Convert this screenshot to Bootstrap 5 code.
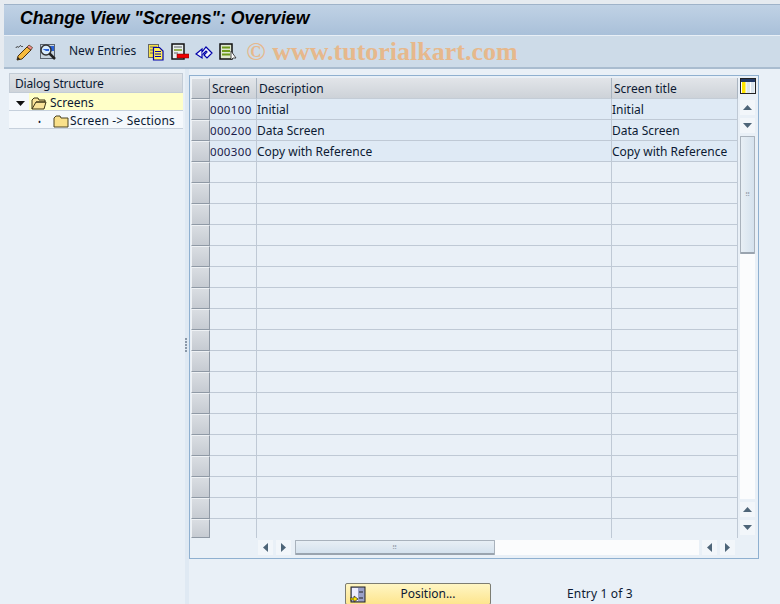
<!DOCTYPE html>
<html lang="en"><head><meta charset="utf-8"><title>Change View</title>
<link href="https://cdn.jsdelivr.net/npm/bootstrap@5.3.0/dist/css/bootstrap.min.css" rel="stylesheet">
<style>
html,body{height:604px;overflow:hidden}
body{background:#e9f0f7;color:#0c1a33;font:12px/1.2 "Noto Sans","Open Sans",sans-serif}
.shell{width:780px;height:604px}
.head-wrap{padding:4px 0 0 4px;background:#e6ebf0}
.title-bar{height:32px;padding-left:16px;background:linear-gradient(#c0d2e5,#a9c0d9);border-top:1px solid #9fb3c9;border-bottom:1px solid #e8eff6;font:italic bold 17.7px "Liberation Sans",sans-serif;color:#000;line-height:26px}
.tool-bar{height:33px;background:#cddbe8;border-bottom:2px solid #a9bccf;padding-left:11px}
.tool-ic{width:18px;height:18px;flex:none}
.tool-gap{margin-left:6px}
.tool-label{margin:0 11px 0 12px;color:#0c1a33;font-size:12px}
.mark-text{font:bold 26px "Liberation Serif",serif;color:#e6b88c;margin-left:9px;white-space:nowrap}
.main-area{height:535px}
.tree-pane{width:185px;padding:4px 2px 0 9px;flex:none}
.tree-head{height:20px;line-height:19px;padding-left:5px;background:linear-gradient(#e0e4e8,#cfd4da);border:1px solid #c3ccd6;letter-spacing:-.2px}
.tree-row{height:18px;border-bottom:1px solid #c6d0dc;background:#f4f8fc;white-space:nowrap;padding-top:4px}
.tree-hi{background:linear-gradient(#f4f8fc,#f4f8fc) no-repeat left/20px 100%,#ffffc8}
.caret-box{width:22px;flex:none;padding-left:7px}
.dot-box{width:44px;text-align:right;padding-right:12px;flex:none;font-size:8px}
.folder-ic{margin-right:3px;flex:none}
.folder-sub{margin-right:1px;flex:none}
.sub-label{letter-spacing:.17px}
.split-bar{width:4px;flex:none;background:#dfe9f3;gap:1px;padding-top:16px}
.split-bar i{width:2px;height:2px;background:#8a98a8;display:block}
.right-pane{width:591px;padding:6px 0 0 0}
.grid-box{width:570px;height:484px;border:1px solid #8fb0d0;padding:2px 1px 0 1px;background:#e9f0f7}
.grid-top{height:459px}
.grid-tbl{width:547px;height:459px;border-collapse:separate;border-spacing:0;table-layout:fixed;flex:none}
.grid-tbl th{height:21px;font-weight:400;padding:2px 0 0 2px;background:linear-gradient(#e2e5e9,#cdd2d8);border-right:1px solid #a9b4c0;border-bottom:1px solid #c3ccd6;white-space:nowrap}
.grid-tbl td{height:21px;padding:2px 0 0;border-right:1px solid #bfc9d5;border-bottom:1px solid #bfc9d5;white-space:nowrap;overflow:hidden}
.grid-tbl tr.filled td{background:#dfeaf5}
.grid-tbl td.sel,.grid-tbl th.sel{background:linear-gradient(#d9dde2,#c6cbd2)!important;border:1px solid #eef1f4;border-right:1px solid #8f99a5;border-bottom:1px solid #8f99a5;padding:0}
.grid-tbl tr:last-child td{height:19px;border-bottom:0}
.grid-tbl tr:last-child td.sel{border-bottom:1px solid #8f99a5}
.grid-tbl td.num-cell{font-size:11.5px;letter-spacing:.35px;color:#1b1b4a}
.vert-sb{width:19px;padding:0 0 2px 2px;gap:3px}
.cfg-btn{height:18px;width:16px;margin-top:-1px;margin-bottom:2px;flex:none}
.sb-btn{height:15px;width:15px;background:#f2f6fa;flex:none}
.v-grow{flex:1;width:15px;background:#fbfcfd;margin-top:-3px}
.v-thumb{width:15px;height:118px;background:linear-gradient(90deg,#e8eff5,#d5e2ee);border:1px solid #a9b2bc;border-bottom:2px solid #9aa4af;border-radius:1px}
.grip{color:#9aa4af;font-size:7px;line-height:1;letter-spacing:1px}
.horz-sb{height:15px;margin:3px 0 0 67px;gap:3px;width:477px}
.h-thumb{width:200px;height:15px;margin-left:1px;background:linear-gradient(#e8eff5,#d5e2ee);border:1px solid #a9b2bc;border-bottom:2px solid #9aa4af;border-radius:1px;flex:none}
.h-track{flex:1;height:15px;background:#fbfcfd;margin-left:-3px}
.foot-row{height:46px;padding-top:24px}
.pos-btn{width:146px;height:22px;padding:0;font-size:12px;line-height:1;margin-left:156px;border:1px solid #7d7d72;border-radius:2px;background:linear-gradient(#fff6c4,#fde58e);color:#0c1a33}
.entry-text{margin-left:76px;white-space:nowrap;line-height:22px;letter-spacing:.15px}
</style></head><body>
<svg width="0" height="0" class="d-block"><defs>
<symbol id="tri-up" viewBox="0 0 15 15"><path d="M3 10 7.500 5 12 10z" fill="#4e6578"/></symbol>
<symbol id="tri-dn" viewBox="0 0 15 15"><path d="M3 5h9L7.500 10z" fill="#4e6578"/></symbol>
<symbol id="tri-l" viewBox="0 0 15 15"><path d="M10 3v9L5 7.500z" fill="#4e6578"/></symbol>
<symbol id="tri-r" viewBox="0 0 15 15"><path d="M5 3v9l5-4.500z" fill="#4e6578"/></symbol>
</defs></svg>
<div class="shell d-flex flex-column">
<div class="head-wrap">
<div class="title-bar">Change View "Screens": Overview</div>
<div class="tool-bar d-flex align-items-center">
<svg class="tool-ic" viewBox="0 0 18 18"><path d="M1 5c1-3 2 0 3-1s1-2 2-1 1 1 2 0" fill="none" stroke="#333"/><path d="M3 13 12 4l4 3-9 9-5 1z" fill="#f7bb3d" stroke="#4a3110"/><path d="m12 4 2-2 3.500 2.500L16 7z" fill="#ee8f8f" stroke="#4a3110" stroke-width=".7"/><path d="m2 17 1-3 2 2z" fill="#222"/></svg>
<svg class="tool-ic tool-gap" viewBox="0 0 18 18"><rect x="1.500" y="1.500" width="14" height="14" fill="#c8d4de" stroke="#5a6470"/><rect x="7" y="3" width="8" height="5" fill="#2a62d8"/><circle cx="7" cy="7" r="5" fill="#d7ebfc" stroke="#333" stroke-width="1.500"/><path d="M3.500 6h6.500v2H7z" fill="#2a62d8"/><path d="m10.500 10.500 5.500 5.500" stroke="#222" stroke-width="2.500"/></svg>
<span class="tool-label">New Entries</span>
<svg class="tool-ic" viewBox="0 0 18 18"><rect x="1.500" y="1.500" width="10" height="13" fill="#f5e04a" stroke="#666"/><path d="M3 4h7M3 7h3M3 10h3" stroke="#666"/><path d="M6.500 4.500h6l3.500 3.500v9H6.500z" fill="#ffef5a" stroke="#00a" stroke-width="1.200"/><path d="M8 8.500h6M8 11h6M8 13.500h6" stroke="#00a"/></svg>
<svg class="tool-ic tool-gap" viewBox="0 0 18 18"><rect x="1" y="1" width="12" height="15" fill="#e9eff0" stroke="#111" stroke-width="1.500"/><path d="M3 4h8" stroke="#8a8f90" stroke-width="1.500"/><path d="M3 7h8" stroke="#7a9a20" stroke-width="1.500"/><path d="M3 10h4" stroke="#666"/><rect x="6" y="11" width="12" height="4" fill="#e00" stroke="#600" stroke-width=".5"/></svg>
<svg class="tool-ic tool-gap" viewBox="0 0 18 18"><path d="M1 11 7 6v3l4-5 6 6-5 5-3-3 3-3-1-1-3 3H7v4z" fill="#f3f6fb" stroke="#00a" stroke-width="1.200"/></svg>
<svg class="tool-ic tool-gap" viewBox="0 0 18 18"><rect x="1" y="1" width="12" height="15" fill="#dfe8d0" stroke="#111" stroke-width="1.500"/><path d="M3 4.500h8M3 8h8M3 11.500h8" stroke="#6f9a1a" stroke-width="2"/><path d="M12 8v9l2-2h3z" fill="#fff" stroke="#222" stroke-width=".8"/></svg>
<span class="mark-text">© www.tutorialkart.com</span>
</div>
</div>
<div class="main-area d-flex">
<div class="tree-pane">
<div class="tree-head">Dialog Structure</div>
<div class="tree-row tree-hi d-flex align-items-center">
<span class="caret-box"><svg width="9" height="6" viewBox="0 0 9 6" class="d-block"><path d="M0 0h9L4.500 5z" fill="#111"/></svg></span>
<svg width="16" height="13" viewBox="0 0 16 13" class="folder-ic"><path d="M1 12V3l2-2h4l1 2h6v2H5L1 12h12l2-7H5" fill="#f9e49a" stroke="#3a3416"/></svg>
<span>Screens</span></div>
<div class="tree-row d-flex align-items-center">
<span class="dot-box">•</span>
<svg width="16" height="13" viewBox="0 0 16 13" class="folder-sub"><path d="M1 12V3l2-2h4l1 2h7v9z" fill="#f9e08a" stroke="#4a4320"/></svg>
<span class="sub-label">Screen -&gt; Sections</span></div>
</div>
<div class="split-bar d-flex flex-column align-items-start justify-content-center"><i></i><i></i><i></i><i></i><i></i></div>
<div class="right-pane">
<div class="grid-box">
<div class="grid-top d-flex">
<table class="grid-tbl">
<colgroup><col style="width:19px"><col style="width:47px"><col style="width:355px"><col></colgroup>
<thead><tr><th class="sel"></th><th>Screen</th><th>Description</th><th>Screen title</th></tr></thead>
<tbody>
<tr class="filled"><td class="sel"></td><td class="num-cell">000100</td><td>Initial</td><td>Initial</td></tr>
<tr class="filled"><td class="sel"></td><td class="num-cell">000200</td><td>Data Screen</td><td>Data Screen</td></tr>
<tr class="filled"><td class="sel"></td><td class="num-cell">000300</td><td>Copy with Reference</td><td>Copy with Reference</td></tr>
<tr><td class="sel"></td><td></td><td></td><td></td></tr>
<tr><td class="sel"></td><td></td><td></td><td></td></tr>
<tr><td class="sel"></td><td></td><td></td><td></td></tr>
<tr><td class="sel"></td><td></td><td></td><td></td></tr>
<tr><td class="sel"></td><td></td><td></td><td></td></tr>
<tr><td class="sel"></td><td></td><td></td><td></td></tr>
<tr><td class="sel"></td><td></td><td></td><td></td></tr>
<tr><td class="sel"></td><td></td><td></td><td></td></tr>
<tr><td class="sel"></td><td></td><td></td><td></td></tr>
<tr><td class="sel"></td><td></td><td></td><td></td></tr>
<tr><td class="sel"></td><td></td><td></td><td></td></tr>
<tr><td class="sel"></td><td></td><td></td><td></td></tr>
<tr><td class="sel"></td><td></td><td></td><td></td></tr>
<tr><td class="sel"></td><td></td><td></td><td></td></tr>
<tr><td class="sel"></td><td></td><td></td><td></td></tr>
<tr><td class="sel"></td><td></td><td></td><td></td></tr>
<tr><td class="sel"></td><td></td><td></td><td></td></tr>
<tr><td class="sel"></td><td></td><td></td><td></td></tr>
</tbody></table>
<div class="vert-sb d-flex flex-column">
<svg class="cfg-btn" viewBox="0 0 16 18"><rect x=".5" y="1.500" width="15" height="15" fill="#fff" stroke="#222"/><rect x="1" y="2" width="14" height="3" fill="#223a66"/><rect x="2" y="5" width="3.500" height="11" fill="#ffe600"/><rect x="6.500" y="5" width="3.500" height="11" fill="#dce6ee"/><rect x="11" y="5" width="3.500" height="11" fill="#dce6ee"/></svg>
<svg class="sb-btn"><use href="#tri-up"/></svg>
<svg class="sb-btn"><use href="#tri-dn"/></svg>
<div class="v-thumb d-flex align-items-center justify-content-center"><span class="grip">⠿</span></div>
<div class="v-grow"></div>
<svg class="sb-btn"><use href="#tri-up"/></svg>
<svg class="sb-btn"><use href="#tri-dn"/></svg>
</div>
</div>
<div class="horz-sb d-flex">
<svg class="sb-btn"><use href="#tri-l"/></svg>
<svg class="sb-btn"><use href="#tri-r"/></svg>
<div class="h-thumb d-flex align-items-center justify-content-center"><span class="grip">⠿</span></div>
<div class="h-track"></div>
<svg class="sb-btn"><use href="#tri-l"/></svg>
<svg class="sb-btn"><use href="#tri-r"/></svg>
</div>
</div>
<div class="foot-row d-flex align-items-start">
<button type="button" class="btn pos-btn d-flex align-items-center"><svg width="16" height="17" viewBox="0 0 16 17" class="ms-1"><rect x="1" y="1" width="14" height="15" fill="#9aa0c8" stroke="#222"/><rect x="2" y="2" width="6" height="13" fill="#eef"/><path d="M0 12h4V10l4 3-4 3v-2H0z" fill="#ffe600" stroke="#222" stroke-width=".7"/><path d="M9 6h4M9 12h4" stroke="#222"/></svg><span class="flex-grow-1">Position...</span></button>
<span class="entry-text">Entry 1 of 3</span>
</div>
</div>
</div>
</div>
<script src="https://cdn.jsdelivr.net/npm/bootstrap@5.3.0/dist/js/bootstrap.bundle.min.js"></script>
</body></html>
